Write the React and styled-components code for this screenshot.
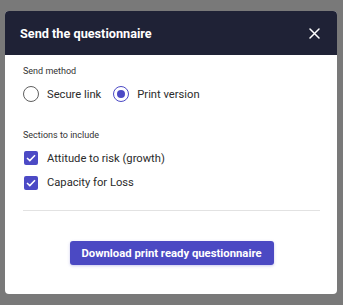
import React from 'react';
import styled, { createGlobalStyle } from 'styled-components';

const GlobalStyle = createGlobalStyle`
  html, body {
    margin: 0;
    padding: 0;
    background: #797979;
    font-family: Roboto, "Liberation Sans", sans-serif;
  }
`

const App = () => {
  return (
    <Page>
      <GlobalStyle />
      <Modal>
        <Header>
          <Title>Send the questionnaire</Title>
          <Close aria-label="Close">
            <svg width="11" height="11" viewBox="0 0 11 11">
              <path d="M1 1 L10 10 M10 1 L1 10" stroke="#fff" strokeWidth="1.5" strokeLinecap="round" />
            </svg>
          </Close>
        </Header>
        <Body>
          <Label>Send method</Label>
          <RadioRow>
            <Option>
              <Radio />
              Secure link
            </Option>
            <Option>
              <Radio checked />
              Print version
            </Option>
          </RadioRow>

          <Label>Sections to include</Label>
          <CheckList>
            <Option>
              <Check>
                <svg width="10" height="8" viewBox="0 0 10 8">
                  <path d="M1 4 L3.8 6.6 L9 1.2" fill="none" stroke="#fff" strokeWidth="1.5" />
                </svg>
              </Check>
              Attitude to risk (growth)
            </Option>
            <Option>
              <Check>
                <svg width="10" height="8" viewBox="0 0 10 8">
                  <path d="M1 4 L3.8 6.6 L9 1.2" fill="none" stroke="#fff" strokeWidth="1.5" />
                </svg>
              </Check>
              Capacity for Loss
            </Option>
          </CheckList>

          <Divider />

          <Footer>
            <Button>Download print ready questionnaire</Button>
          </Footer>
        </Body>
      </Modal>
    </Page>
  )
}

export default App;

const Page = styled.div`
  padding: 11px 6px 11px 5px;
`

const Modal = styled.div`
  width: 332px;
  height: 283px;
  background: #fff;
  border-radius: 4px;
  overflow: hidden;
  display: flex;
  flex-direction: column;
`

const Header = styled.div`
  height: 44px;
  background: #1f2236;
  display: flex;
  align-items: center;
  justify-content: space-between;
  padding: 0 16px 0 15px;
`

const Title = styled.div`
  color: #fff;
  font-size: 12.7px;
  font-weight: 700;
`

const Close = styled.div`
  width: 14px;
  height: 14px;
  display: flex;
  align-items: center;
  justify-content: center;
`

const Body = styled.div`
  padding: 9px 17px 0 18px;
  display: flex;
  flex-direction: column;
`

const Label = styled.div`
  font-size: 9px;
  line-height: 14px;
  color: #333;
`

const RadioRow = styled.div`
  display: flex;
  gap: 12px;
  margin: 8px 0 26px;
`

const Option = styled.label`
  display: flex;
  align-items: center;
  gap: 8px;
  font-size: 11.2px;
  color: #2b2b2b;
  height: 16px;
`

const Radio = styled.span`
  box-sizing: border-box;
  width: 16px;
  height: 16px;
  border-radius: 50%;
  border: 1.6px solid ${p => (p.checked ? '#4c4ac5' : '#5f5f5f')};
  display: flex;
  align-items: center;
  justify-content: center;
  &::after {
    content: '';
    display: ${p => (p.checked ? 'block' : 'none')};
    width: 8px;
    height: 8px;
    border-radius: 50%;
    background: #4c4ac5;
  }
`

const CheckList = styled.div`
  display: flex;
  flex-direction: column;
  gap: 8.5px;
  margin-top: 8px;
`

const Check = styled.span`
  width: 14px;
  height: 14px;
  margin-left: 1px;
  margin-right: 1px;
  border-radius: 2px;
  background: #4c4ac5;
  display: flex;
  align-items: center;
  justify-content: center;
`

const Divider = styled.div`
  height: 1px;
  background: #e2e2e2;
  margin: 19.5px 0 0;
`

const Footer = styled.div`
  display: flex;
  justify-content: center;
  padding-top: 30px;
`

const Button = styled.button`
  width: 204px;
  height: 24px;
  border: none;
  border-radius: 3px;
  background: #4b49c3;
  color: #fff;
  font-family: Roboto, "Liberation Sans", sans-serif;
  font-size: 11.3px;
  font-weight: 700;
  box-shadow: 0 1px 3px rgba(75, 73, 195, 0.3);
  padding: 0;
`
